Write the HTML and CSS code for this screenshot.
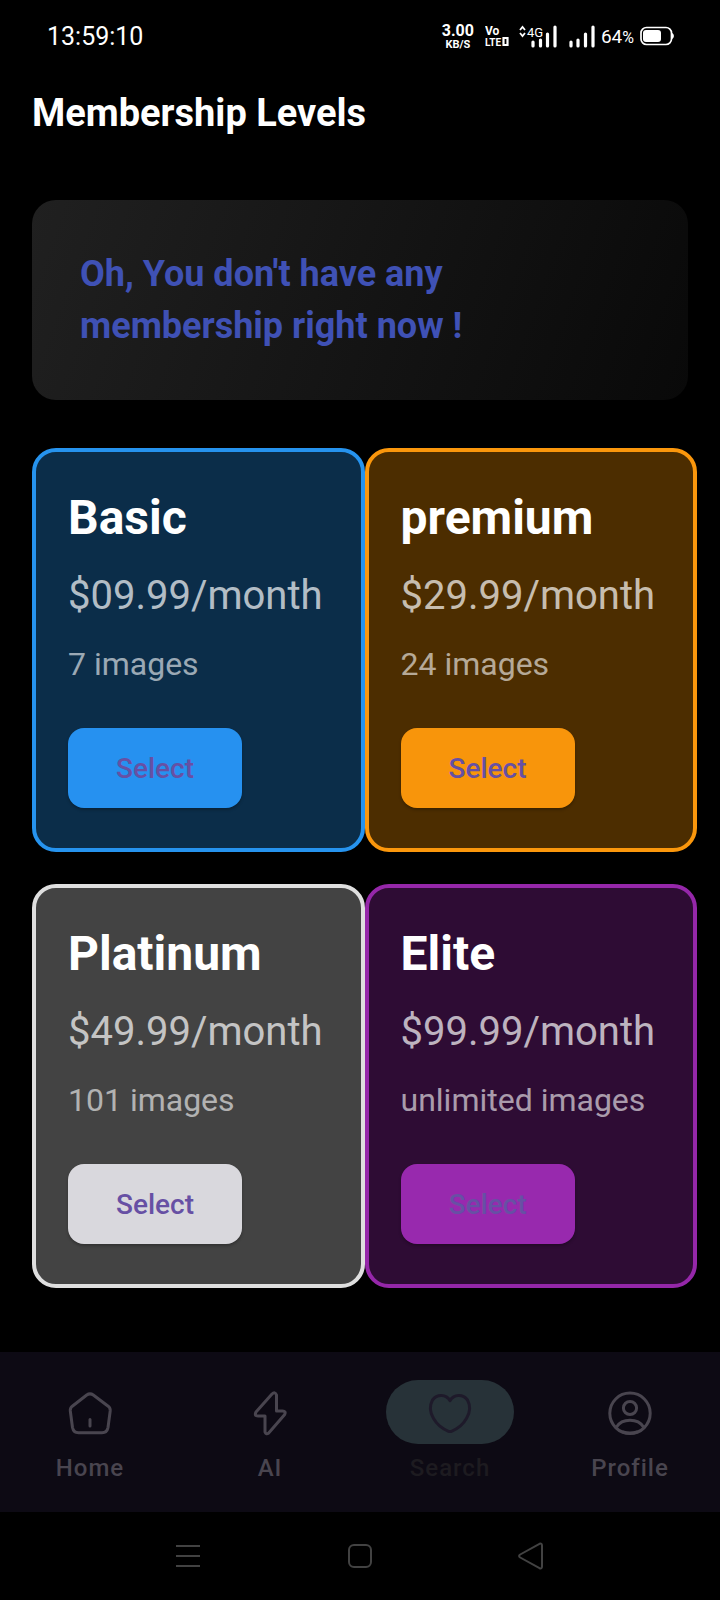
FILE: index.html
```
<!DOCTYPE html>
<html lang="en">
<head>
<meta charset="utf-8">
<meta name="viewport" content="width=device-width, initial-scale=1">
<title>Membership Levels</title>
<link rel="stylesheet" href="styles.css">
</head>
<body>
<div class="screen">
  <div class="status">
    <span class="clock">13:59:10</span>
    <div class="indicators">
      <div class="speed"><span class="speed-value">3.00</span><span class="speed-unit">KB/S</span></div>
      <svg class="volte" width="24" height="24" viewBox="0 0 24 24">
        <text x="0" y="11" class="t-vo">Vo</text>
        <text x="0" y="22" class="t-lte">LTE</text>
        <path d="M18.500 14h4v7h-4z" fill="none" stroke="#fff" stroke-width="2.200"/>
      </svg>
      <svg class="cell-4g" width="38" height="24" viewBox="0 0 38 24">
        <path d="M1 6l2.500-3L6 6M1 9l2.500 3L6 9" fill="none" stroke="#fff" stroke-width="1.800"/>
        <text x="8" y="13" class="t-4g">4G</text>
        <path d="M14 18v4M21.500 16v6M28.500 10v12M36 3v19" stroke="#fff" stroke-width="3.200" stroke-linecap="round"/>
      </svg>
      <svg class="cell" width="26" height="24" viewBox="0 0 26 24">
        <path d="M2 18v4M9 16v6M16.500 10v12M24 3v19" stroke="#fff" stroke-width="3.200" stroke-linecap="round"/>
      </svg>
      <span class="charge">64<small>%</small></span>
      <svg width="34" height="20" viewBox="0 0 34 20">
        <rect x="1" y="1.500" width="30.500" height="17" rx="5.500" fill="none" stroke="#fff" stroke-width="1.700"/>
        <rect x="3" y="4" width="18" height="12" rx="3" fill="#fff"/>
        <path d="M32 7c2.500 1 2.500 5 0 6z" fill="#fff"/>
      </svg>
    </div>
  </div>

  <header class="appbar"><h1>Membership Levels</h1></header>

  <main class="content">
    <section class="notice"><p>Oh, You don't have any membership right now !</p></section>

    <section class="plans">
      <article class="plan basic">
        <h2>Basic</h2>
        <p class="price">$09.99/month</p>
        <p class="quota">7 images</p>
        <button type="button">Select</button>
      </article>
      <article class="plan premium">
        <h2>premium</h2>
        <p class="price">$29.99/month</p>
        <p class="quota">24 images</p>
        <button type="button">Select</button>
      </article>
      <article class="plan platinum">
        <h2>Platinum</h2>
        <p class="price">$49.99/month</p>
        <p class="quota">101 images</p>
        <button type="button">Select</button>
      </article>
      <article class="plan elite">
        <h2>Elite</h2>
        <p class="price">$99.99/month</p>
        <p class="quota">unlimited images</p>
        <button type="button">Select</button>
      </article>
    </section>
  </main>

  <nav class="tabs">
    <a href="#home" class="tab">
      <span class="pill"><svg class="icon" viewBox="0 0 48 48"><path d="M20.700 7Q24 4.700 27.300 7L42.200 18.200Q44.500 20.100 44.200 23L42 39.500Q41 44.800 36 44.800H12.500Q7.500 44.800 6.500 39.500L4.300 23Q4 20.100 6.300 18.200ZM24 31.500v6.500"/></svg></span>
      <span class="label">Home</span>
    </a>
    <a href="#ai" class="tab">
      <span class="pill"><svg class="icon" viewBox="0 0 48 48"><path d="M26 6L10 24Q8 28 12 28H19V44Q20 47 22.700 45L38.500 26.700Q40.500 23 36.500 23H30.500V7Q29 3.200 26 6Z"/></svg></span>
      <span class="label">AI</span>
    </a>
    <a href="#search" class="tab active" aria-current="page">
      <span class="pill"><svg class="icon" viewBox="0 0 48 48"><path d="M24 12.700C20 6 11 6 6.500 12C0 24 10 38.500 22.500 43.300Q24 43.900 25.500 43.300C38 38.500 48 24 41.500 12C37 6 28 6 24 12.700Z"/></svg></span>
      <span class="label">Search</span>
    </a>
    <a href="#profile" class="tab">
      <span class="pill"><svg class="icon" viewBox="0 0 48 48"><circle cx="24" cy="25.300" r="20.200"/><circle cx="24" cy="20" r="6.600"/><path d="M10.500 39C16 30 32 30 37.500 39M17 44q7 2 14 0"/></svg></span>
      <span class="label">Profile</span>
    </a>
  </nav>

  <div class="system-nav">
    <button type="button" aria-label="Recent apps"><svg viewBox="0 0 28 28"><path d="M2 4h24M2 14h24M2 24h24"/></svg></button>
    <button type="button" aria-label="Home screen"><svg viewBox="0 0 28 28"><rect x="3" y="3" width="22" height="22" rx="5"/></svg></button>
    <button type="button" aria-label="Back"><svg viewBox="0 0 28 28"><path d="M2.200 12.500Q0 14 2.200 15.500L21.500 26.200Q24 27 24 24.500V3.500Q24 1 21.500 1.800Z"/></svg></button>
  </div>
</div>
</body>
</html>
```
FILE: styles.css
```
* { box-sizing: border-box; }
body { margin: 0; background: #000; color: #fff; font-family: Roboto, sans-serif; }
h1, h2, p { margin: 0; }
button { border: 0; font-family: inherit; cursor: pointer; }

.screen { display: flex; flex-direction: column; min-height: 100vh; }

.status { display: flex; align-items: center; justify-content: space-between; height: 72px; padding: 0 46px 0 47px; }
.clock { font-size: 25px; }
.indicators { display: flex; align-items: center; }
.speed { display: flex; flex-direction: column; align-items: center; margin-right: 11px; font-weight: 700; }
.speed-value { font-size: 16px; line-height: 16px; }
.speed-unit { font-size: 11px; line-height: 11px; }
.volte { margin-right: 10px; }
.cell-4g { margin-right: 12px; }
.cell { margin-right: 6px; }
.t-vo { fill: #fff; font-size: 12px; font-weight: 700; }
.t-lte { fill: #fff; font-size: 10px; font-weight: 700; }
.t-4g { fill: #fff; font-size: 13px; }
.charge { margin-right: 6px; font-size: 19px; }
.charge small { font-size: 16px; }

.appbar { display: flex; align-items: center; height: 80px; padding: 2px 32px 0; }
.appbar h1 { font-size: 38px; font-weight: 700; line-height: 48px; }

.content { display: flex; flex-direction: column; flex: 1; gap: 48px; padding: 48px 0 64px 32px; }
.notice { margin-right: 32px; padding: 48px; border-radius: 24px; background: linear-gradient(110deg, #202020, #090909); }
.notice p { max-width: 440px; color: #3f51b5; font-size: 36px; font-weight: 700; line-height: 52px; }

.plans { display: grid; grid-template-columns: 1fr 1fr; row-gap: 32px; margin-right: 23px; }
.plan { display: flex; flex-direction: column; align-items: flex-start; gap: 16px; padding: 32px 32px 40px; border: 4px solid; border-radius: 24px; }
.plan h2 { color: #fff; font-size: 48px; font-weight: 700; line-height: 68px; }
.price { color: rgba(255, 255, 255, .7); font-size: 40px; line-height: 56px; }
.quota { color: rgba(255, 255, 255, .6); font-size: 32px; line-height: 48px; }
.plan button { height: 80px; margin-top: 24px; padding: 0 48px; border-radius: 16px; color: #6750a4; font-size: 28px; font-weight: 500; box-shadow: 0 2px 3px rgba(0, 0, 0, .25); }

.basic { border-color: #2693ee; background: #0b2d49; }
.basic button { background: #2691f0; }
.premium { border-color: #fb970c; background: #4c2d00; }
.premium button { background: #f8950b; }
.platinum { border-color: #dfdfdf; background: #434343; }
.platinum button { background: #d9d8dd; }
.elite { border-color: #9527a9; background: #2e0c34; }
.elite button { background: #9829ae; }

.tabs { display: grid; grid-template-columns: repeat(4, 1fr); height: 160px; padding-top: 28px; background: #0d0a14; }
.tab { display: flex; flex-direction: column; align-items: center; gap: 8px; color: #49454f; text-decoration: none; }
.pill { display: grid; place-items: center; width: 128px; height: 64px; border-radius: 32px; }
.icon { width: 48px; height: 48px; fill: none; stroke: currentColor; stroke-width: 3; stroke-linecap: round; stroke-linejoin: round; }
.label { font-size: 24px; font-weight: 500; line-height: 32px; letter-spacing: 1px; }
.active { color: #1d1b20; }
.active .pill { background: #273238; }
.active .icon { color: #1e1a2a; }

.system-nav { display: flex; align-items: center; justify-content: center; gap: 144px; height: 88px; }
.system-nav button { display: flex; padding: 0; background: none; }
.system-nav svg { width: 28px; height: 28px; fill: none; stroke: #424242; stroke-width: 2; stroke-linejoin: round; }
```
